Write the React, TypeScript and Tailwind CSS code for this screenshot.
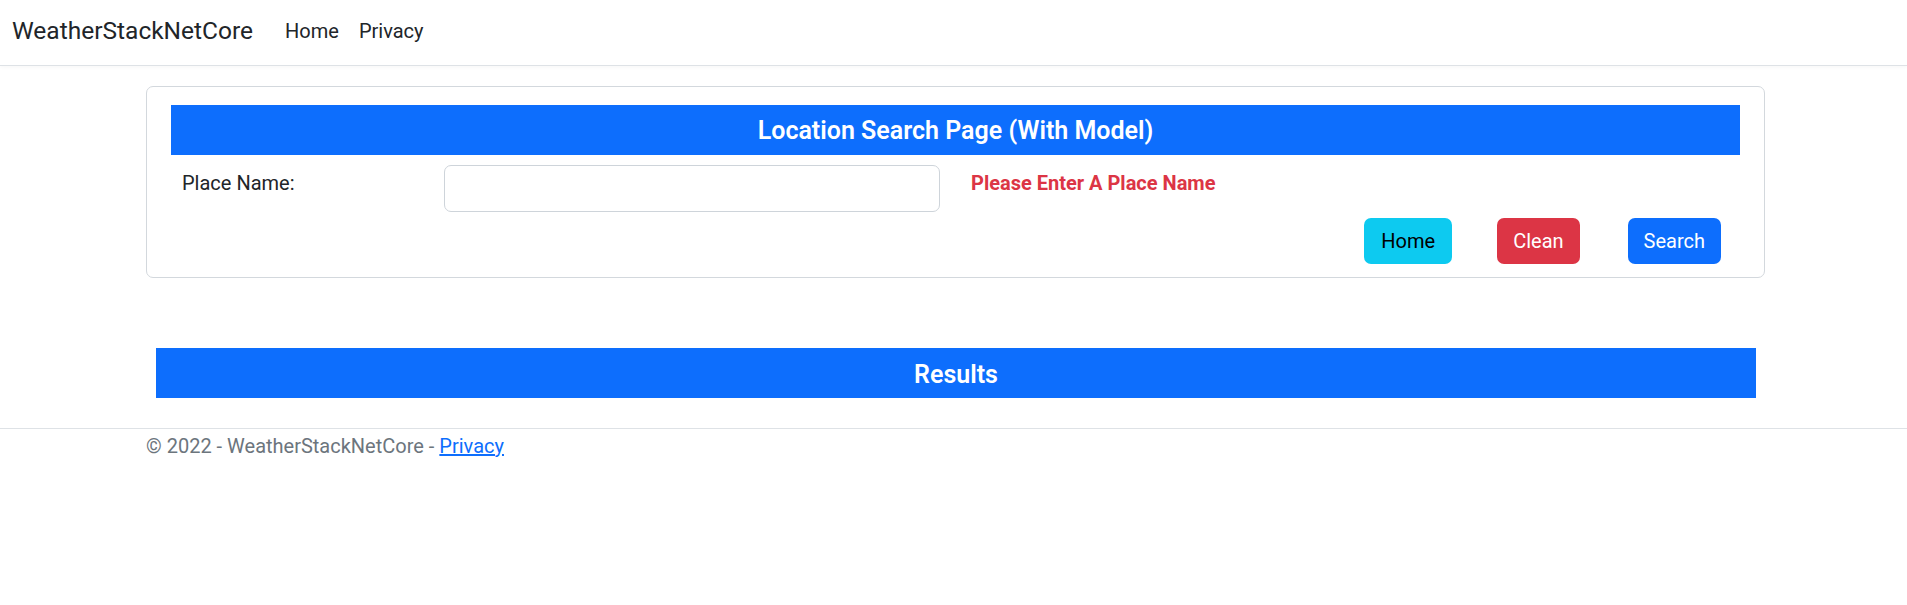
export default function App() {
  return (
    <div className="min-h-[605px] bg-white font-['Roboto','Liberation_Sans',sans-serif] text-[#212529]">
      <nav className="flex h-[66px] items-center border-b border-[#dee2e6] bg-white px-[12px] pb-[3px] shadow-[0_1px_4px_rgba(0,0,0,0.04)]">
        <a className="mr-[32px] text-[24.5px] text-[#212529]">WeatherStackNetCore</a>
        <ul className="flex items-center gap-[20px] text-[20px]">
          <li>Home</li>
          <li>Privacy</li>
        </ul>
      </nav>

      <main className="ml-[146px] w-[1619px] pt-[20px]">
        <div className="rounded-[7px] border border-[#d3d8dd] px-[24px] pb-[13px] pt-[18px]">
          <div className="flex h-[50px] items-center justify-center bg-[#0d6efd] pt-[2px]">
            <h5 className="text-[25px] font-semibold text-white">Location Search Page (With Model)</h5>
          </div>

          <div className="mt-[10px] flex items-start">
            <label className="ml-[11px] mt-[3px] w-[262px] text-[20px] leading-[30px]">Place Name:</label>
            <input
              className="h-[47px] w-[496px] rounded-[7px] border border-[#ced4da] px-[15px] text-[20px]"
              type="text"
            />
            <span className="ml-[31px] mt-[3px] text-[20px] font-bold leading-[30px] text-[#dc3545]">
              Please Enter A Place Name
            </span>
          </div>

          <div className="mt-[6px] flex justify-end pr-[19px] text-[20px]">
            <button className="h-[46px] rounded-[7px] bg-[#0dcaf0] px-[17px] text-black">Home</button>
            <button className="ml-[45px] h-[46px] rounded-[7px] bg-[#dc3545] px-[16px] text-white">Clean</button>
            <button className="ml-[48px] h-[46px] rounded-[7px] bg-[#0d6efd] px-[16px] text-white">Search</button>
          </div>
        </div>

        <div className="ml-[10px] mt-[70px] flex h-[50px] w-[1600px] items-center justify-center bg-[#0d6efd] pt-[3px]">
          <h5 className="text-[25px] font-semibold text-white">Results</h5>
        </div>
      </main>

      <footer className="mt-[30px] border-t border-[#dee2e6] text-[20px] text-[#6c757d]">
        <div className="ml-[146px] pt-[2px] leading-[30px]">
          © 2022 - WeatherStackNetCore -{" "}
          <a className="text-[#0d6efd] underline">Privacy</a>
        </div>
      </footer>
    </div>
  );
}
